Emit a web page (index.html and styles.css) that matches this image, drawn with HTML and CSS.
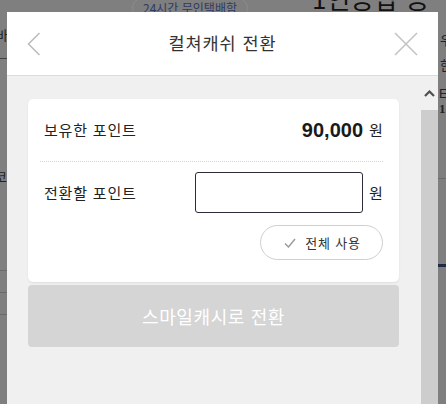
FILE: index.html
```html
<!DOCTYPE html>
<html lang="ko">
<head>
<meta charset="utf-8">
<link rel="stylesheet" href="styles.css">
</head>
<body>
<div class="backdrop">
  <span class="bg-pill">24시간 무인택배함</span>
  <span class="bg-title">1인증샵 공고</span>
  <span class="bg-frag bg-l1">바</span>
  <span class="bg-line bg-ll1"></span>
  <span class="bg-frag bg-l2">코</span>
  <span class="bg-line bg-ll2"></span>
  <span class="bg-line bg-ll3"></span>
  <span class="bg-line bg-ll4"></span>
  <span class="bg-frag bg-r1">우</span>
  <span class="bg-frag bg-r2">한</span>
  <span class="bg-frag bg-r3">E</span>
  <span class="bg-frag bg-r4">1</span>
  <span class="bg-line bg-rl1"></span>
  <span class="bg-line bg-rl2"></span>
</div>

<div class="modal">
  <header class="modal-header">
    <button class="icon-btn" aria-label="뒤로">
      <svg width="14" height="24" viewBox="0 0 14 24"><path d="M12.5 1 L1.5 12 L12.5 23" fill="none" stroke="#bdbdbd" stroke-width="1.6"/></svg>
    </button>
    <h1 class="modal-title">컬쳐캐쉬 전환</h1>
    <button class="icon-btn" aria-label="닫기">
      <svg width="24" height="24" viewBox="0 0 24 24"><path d="M1 1 L23 23 M23 1 L1 23" fill="none" stroke="#c4c4c4" stroke-width="1.6"/></svg>
    </button>
  </header>
  <div class="modal-body">
    <div class="content">
      <section class="card">
        <div class="row row-own">
          <span class="label">보유한 포인트</span>
          <span class="amount"><b class="num">90,000</b><span class="unit">원</span></span>
        </div>
        <div class="divider"></div>
        <div class="row row-convert">
          <span class="label">전환할 포인트</span>
          <span class="amount"><span class="input"></span><span class="unit">원</span></span>
        </div>
        <div class="row row-all">
          <button class="pill">
            <svg width="12" height="10" viewBox="0 0 12 10"><path d="M1 5.5 L4.5 9 L11 1" fill="none" stroke="#999" stroke-width="1.4"/></svg>
            <span>전체 사용</span>
          </button>
        </div>
      </section>
      <button class="convert">스마일캐시로 전환</button>
    </div>
    <div class="scrollbar">
      <div class="sb-up">
        <svg width="11" height="7" viewBox="0 0 11 7"><path d="M1 6 L5.5 1.5 L10 6" fill="none" stroke="#505050" stroke-width="2.2"/></svg>
      </div>
      <div class="sb-thumb"></div>
    </div>
  </div>
</div>
</body>
</html>
```

FILE: styles.css
```css
* { box-sizing: border-box; }
html, body { margin: 0; padding: 0; }
body {
  width: 446px;
  height: 404px;
  overflow: hidden;
  background: #7f7f7f;
  font-family: "Noto Sans CJK KR", "Noto Sans", sans-serif;
  position: relative;
}
.backdrop { position: absolute; inset: 0; }
.bg-pill {
  position: absolute; left: 132px; top: -2px;
  padding: 2px 10px; border: 1px solid #8c8c8c; border-radius: 10px;
  font-size: 12px; color: #2e3b63; line-height: 14px;
}
.bg-title {
  position: absolute; left: 312px; top: -16px;
  font-size: 26px; color: #111; line-height: 28px;
}
.bg-frag { position: absolute; font-size: 13px; color: #222; line-height: 14px; }
.bg-l1 { left: -4px; top: 28px; }
.bg-l2 { left: -5px; top: 170px; }
.bg-r1 { left: 440px; top: 33px; }
.bg-r2 { left: 440px; top: 58px; }
.bg-r3 { left: 439px; top: 87px; font-family: "Liberation Sans", sans-serif; }
.bg-r4 { left: 439px; top: 102px; font-weight: bold; font-family: "Liberation Serif", serif; }
.bg-line { position: absolute; height: 1px; background: #6a6a6a; }
.bg-ll1 { left: 0; width: 7px; top: 58px; background: #444; }
.bg-ll2 { left: 0; width: 7px; top: 270px; }
.bg-ll3 { left: 0; width: 7px; top: 292px; }
.bg-ll4 { left: 0; width: 7px; top: 314px; }
.bg-rl1 { left: 438px; width: 8px; top: 178px; }
.bg-rl2 { left: 438px; width: 8px; top: 264px; height: 3px; background: #1f2a44; }

.modal {
  position: absolute; left: 7px; top: 12px;
  width: 431px; height: 400px;
  display: flex; flex-direction: column;
  background: #f0f0f0;
}
.modal-header {
  height: 64px; flex: none;
  background: #fff;
  border-bottom: 1px solid #dcdcdc;
  display: flex; align-items: center; justify-content: space-between;
  padding: 0 20px 0 20px;
}
.icon-btn {
  border: 0; background: none; padding: 0; margin: 0;
  width: 24px; height: 24px;
  display: flex; align-items: center; justify-content: center;
}
.modal-header .icon-btn:first-child { justify-content: flex-start; width: 24px; }
.modal-title {
  margin: 0 0 2px 0; font-size: 17.5px; font-weight: normal; color: #333;
  letter-spacing: 0.9px; line-height: 24px;
}
.modal-body { flex: 1; display: flex; min-height: 0; }
.content { flex: 1; padding: 23px 22px 0 21px; display: flex; flex-direction: column; }
.card {
  background: #fff; border-radius: 5px;
  height: 183px;
  box-shadow: 0 1px 2px rgba(0,0,0,0.08);
  padding: 0 18px 0 16px;
  display: flex; flex-direction: column;
}
.row { display: flex; align-items: center; justify-content: space-between; }
.row-own { height: 62px; }
.label { font-size: 15px; color: #222; line-height: 20px; letter-spacing: 0.8px; }
.amount { display: flex; align-items: center; }
.num {
  font-family: "Liberation Sans", Arial, sans-serif; font-weight: bold;
  font-size: 20px; color: #1a1a1a; line-height: 24px;
}
.unit { font-size: 15px; color: #222; margin-left: 6px; width: 12px; line-height: 20px; }
.divider { height: 0; border-top: 1px dotted #d8d8d8; margin: 0 -2px 0 -4px; }
.row-convert { margin-top: 10px; height: 41px; }
.input {
  width: 168px; height: 41px;
  border: 1px solid #2b2b3a; border-radius: 3px; background: #fff;
}
.row-all { justify-content: flex-end; padding-top: 12px; margin-right: -2px; }
.pill {
  width: 123px; height: 35px;
  border: 1px solid #cfcfcf; border-radius: 18px; background: #fff;
  display: flex; align-items: center; justify-content: center; gap: 9px;
  font-family: inherit; font-size: 13px; color: #333; letter-spacing: 0.8px;
  padding: 0 0 0 2px;
}
.convert {
  margin-top: 3px;
  height: 62px; border: 0; border-radius: 4px;
  background: #d5d5d5; color: #fff;
  font-family: inherit; font-size: 18px; letter-spacing: 0.6px;
}
.scrollbar { width: 17px; flex: none; display: flex; flex-direction: column; }
.sb-up { height: 34px; display: flex; justify-content: center; padding-top: 14px; }
.sb-thumb { flex: 1; background: #cdcdcd; }
```
